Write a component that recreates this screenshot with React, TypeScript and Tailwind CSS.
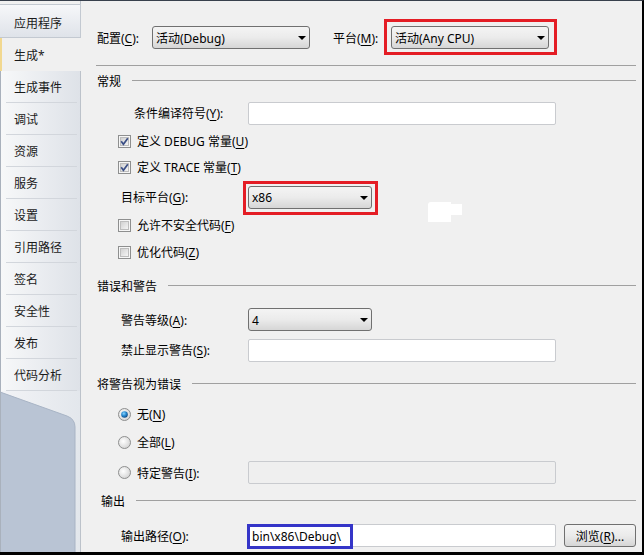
import React from "react";

function Mn({ pre, k, post }: { pre: string; k: string; post: string }) {
  return (
    <span className="whitespace-nowrap pt-[2px]">
      {pre}
      <span className="underline decoration-1 underline-offset-[2px]">{k}</span>
      {post}
    </span>
  );
}

function Combo({ value, w }: { value: string; w: string }) {
  return (
    <div
      className={`relative flex h-[23px] items-center rounded-[3px] border border-[#707070] bg-gradient-to-b from-[#f4f4f4] via-[#ebebeb] to-[#d6d6d6] pl-[3px] ${w}`}
    >
      <span className="whitespace-nowrap pt-[2px]">{value}</span>
      <svg className="absolute right-[3px] top-[9px]" width="8" height="4" viewBox="0 0 8 4">
        <path d="M0 0H8L4 4Z" fill="#000" />
      </svg>
    </div>
  );
}

function TextBox({ children, disabled }: { children?: React.ReactNode; disabled?: boolean }) {
  return (
    <div
      className={`relative flex h-[23px] w-[308px] items-center rounded-[2px] border border-[#c9cbcf] ${
        disabled ? "bg-[#efefef]" : "bg-white"
      }`}
    >
      {children}
    </div>
  );
}

function Check({ checked }: { checked?: boolean }) {
  return (
    <svg width="13" height="13" viewBox="0 0 13 13" className="shrink-0">
      <defs>
        <linearGradient id="cbg" x1="0" y1="0" x2="1" y2="1">
          <stop offset="0" stopColor="#cfcfcf" />
          <stop offset="1" stopColor="#f7f7f7" />
        </linearGradient>
      </defs>
      <rect x="0.5" y="0.5" width="12" height="12" fill="#f6f6f6" stroke="#8e8f8f" />
      <rect x="2.5" y="2.5" width="8" height="8" fill="url(#cbg)" stroke="#bdbdbd" />
      {checked && <path d="M3.2 6.3 L5.4 9.3 L9.8 3.2" stroke="#3b4f86" strokeWidth="1.7" fill="none" />}
    </svg>
  );
}

function Radio({ checked }: { checked?: boolean }) {
  return (
    <svg width="13" height="13" viewBox="0 0 13 13" className="shrink-0">
      <defs>
        <radialGradient id="rbg" cx="0.4" cy="0.4" r="0.7">
          <stop offset="0" stopColor="#ffffff" />
          <stop offset="1" stopColor="#cfcfcf" />
        </radialGradient>
        <radialGradient id="rdot" cx="0.4" cy="0.35" r="0.65">
          <stop offset="0" stopColor="#8fd4fa" />
          <stop offset="0.5" stopColor="#2b8fd6" />
          <stop offset="1" stopColor="#0f4a86" />
        </radialGradient>
      </defs>
      <circle cx="6.5" cy="6.5" r="6" fill="url(#rbg)" stroke="#8e8f8f" />
      {checked && <circle cx="6.5" cy="6.5" r="3.3" fill="url(#rdot)" />}
    </svg>
  );
}

function Heading({ children, mt, pl }: { children: React.ReactNode; mt: string; pl: string }) {
  return (
    <div className={`flex h-[16px] items-center pr-[6px] ${mt} ${pl}`}>
      <span className="whitespace-nowrap pt-[3px]">{children}</span>
      <div className="ml-[11px] h-px flex-1 bg-[#a0a0a0]" />
    </div>
  );
}

const tabs = ["生成事件", "调试", "资源", "服务", "设置", "引用路径", "签名", "安全性", "发布", "代码分析"];

export default function App() {
  return (
    <div className="flex h-[555px] w-[644px] overflow-hidden border-t border-r-2 border-b-[3px] border-t-[#38404c] border-r-black border-b-black bg-[#f0f0f0] font-[family-name:'Noto_Sans','Noto_Sans_CJK_SC',sans-serif] text-[12px] leading-none text-black">
      {/* sidebar */}
      <div className="flex w-[81px] shrink-0 flex-col">
        <div className="h-[3px] border-r border-[#bcc2ca]" />
        <div className="flex h-[34px] items-center border-y border-r border-[#c3c9d1] bg-gradient-to-b from-[#f6f7f9] to-[#dfe3e9] pl-[14px] pt-[5px] text-[#1a1a1a]">
          应用程序
        </div>
        <div className="flex h-[33px] items-center border-l-[2px] border-[#f2d88f] bg-[#f0f0f0] pl-[12px] pt-[2px] text-[#1a1a1a]">
          生成*
        </div>
        {tabs.map((t) => (
          <div
            key={t}
            className="flex h-[32px] flex-col border-r border-l border-r-[#bcc2ca] border-l-[#a9b1bc] bg-gradient-to-r from-[#f7f8f9] to-[#dee2e8]"
          >
            <div className="flex flex-1 items-center pl-[13px] pt-[3px] text-[#1a1a1a]">{t}</div>
            <div className="ml-[5px] mr-[3px] h-px bg-[#d2d6dc]" />
          </div>
        ))}
        <div className="relative flex-1 border-r border-l border-r-[#bcc2ca] border-l-[#a9b1bc] bg-gradient-to-r from-[#f2f3f6] to-[#e3e7ec]">
          <svg className="absolute left-0 top-0" width="80" height="170" viewBox="0 0 80 170">
            <path d="M-1 1 L66 25 Q74 28 74 36 V170 H-1 Z" fill="#b9c4d4" stroke="#a8b4c5" strokeWidth="1" />
          </svg>
        </div>
      </div>

      {/* content */}
      <div className="relative flex min-w-0 flex-1 flex-col bg-[#f0f0f0]">
        {/* row 1 */}
        <div className="mt-[25px] flex h-[23px] items-center pl-[16px]">
          <div className="flex w-[55px]">
            <Mn pre="配置(" k="C" post="):" />
          </div>
          <Combo value="活动(Debug)" w="w-[158px]" />
          <div className="ml-[23px] flex w-[58px]">
            <Mn pre="平台(" k="M" post="):" />
          </div>
          <div className="relative">
            <Combo value="活动(Any CPU)" w="w-[158px]" />
            <div className="pointer-events-none absolute -top-[7px] -right-[8px] -bottom-[6px] -left-[7px] border-[3px] border-[#e41d25]" />
          </div>
        </div>

        <div className="mt-[16px] ml-[15px] mr-[6px] h-px bg-[#a0a0a0]" />

        <Heading mt="mt-[6px]" pl="pl-[16px]">常规</Heading>

        <div className="mt-[14px] flex h-[22px] items-center pl-[53px]">
          <div className="flex w-[114px]">
            <Mn pre="条件编译符号(" k="Y" post="):" />
          </div>
          <TextBox />
        </div>

        <div className="mt-[7px] flex h-[20px] items-center gap-[6px] pl-[37px]">
          <Check checked />
          <span className="pt-[2px]">
            定义 DEBUG 常量(<span className="underline underline-offset-[2px]">U</span>)
          </span>
        </div>
        <div className="mt-[6px] flex h-[20px] items-center gap-[6px] pl-[37px]">
          <Check checked />
          <span className="pt-[2px]">
            定义 TRACE 常量(<span className="underline underline-offset-[2px]">T</span>)
          </span>
        </div>

        <div className="mt-[8px] flex h-[24px] items-center pl-[40px]">
          <div className="flex w-[127px]">
            <Mn pre="目标平台(" k="G" post="):" />
          </div>
          <div className="relative">
            <Combo value="x86" w="w-[124px]" />
            <div className="pointer-events-none absolute -top-[5px] -right-[6px] -bottom-[6px] -left-[5px] border-[3px] border-[#e41d25]" />
          </div>
        </div>

        <div className="mt-[6px] flex h-[20px] items-center gap-[6px] pl-[37px]">
          <Check />
          <Mn pre="允许不安全代码(" k="F" post=")" />
        </div>
        <div className="mt-[7px] flex h-[20px] items-center gap-[6px] pl-[37px]">
          <Check />
          <Mn pre="优化代码(" k="Z" post=")" />
        </div>

        <Heading mt="mt-[15px]" pl="pl-[16px]">错误和警告</Heading>

        <div className="mt-[15px] flex h-[23px] items-center pl-[40px]">
          <div className="flex w-[127px]">
            <Mn pre="警告等级(" k="A" post="):" />
          </div>
          <Combo value="4" w="w-[124px]" />
        </div>

        <div className="mt-[8px] flex h-[22px] items-center pl-[40px]">
          <div className="flex w-[127px]">
            <Mn pre="禁止显示警告(" k="S" post="):" />
          </div>
          <TextBox />
        </div>

        <Heading mt="mt-[14px]" pl="pl-[16px]">将警告视为错误</Heading>

        <div className="mt-[13px] flex h-[20px] items-center gap-[6px] pl-[37px]">
          <Radio checked />
          <Mn pre="无(" k="N" post=")" />
        </div>
        <div className="mt-[8px] flex h-[20px] items-center gap-[6px] pl-[37px]">
          <Radio />
          <Mn pre="全部(" k="L" post=")" />
        </div>
        <div className="mt-[9px] flex h-[23px] items-center pl-[37px]">
          <Radio />
          <div className="ml-[6px] flex w-[111px]">
            <Mn pre="特定警告(" k="I" post="):" />
          </div>
          <TextBox disabled />
        </div>

        <Heading mt="mt-[8px]" pl="pl-[20px]">输出</Heading>

        <div className="mt-[16px] flex h-[23px] items-center pl-[40px]">
          <div className="flex w-[127px]">
            <Mn pre="输出路径(" k="O" post="):" />
          </div>
          <TextBox>
            <span className="whitespace-nowrap pl-[3px] pt-[2px]">bin\x86\Debug\</span>
            <div className="pointer-events-none absolute -top-px -left-[2px] h-[25px] w-[106px] border-[3px] border-[#3535c8]" />
          </TextBox>
          <div className="ml-[8px] flex h-[23px] w-[72px] items-center justify-center rounded-[3px] border border-[#707070] bg-gradient-to-b from-[#f4f4f4] via-[#ebebeb] to-[#d6d6d6]">
            <Mn pre="浏览(" k="R" post=")..." />
          </div>
        </div>

        {/* white artifact */}
        <div className="absolute left-[347px] top-[201px] h-[20px] w-[23px] rounded-tl-[3px] bg-white" />
        <div className="absolute left-[368px] top-[203px] h-[11px] w-[13px] bg-white" />
      </div>
    </div>
  );
}
